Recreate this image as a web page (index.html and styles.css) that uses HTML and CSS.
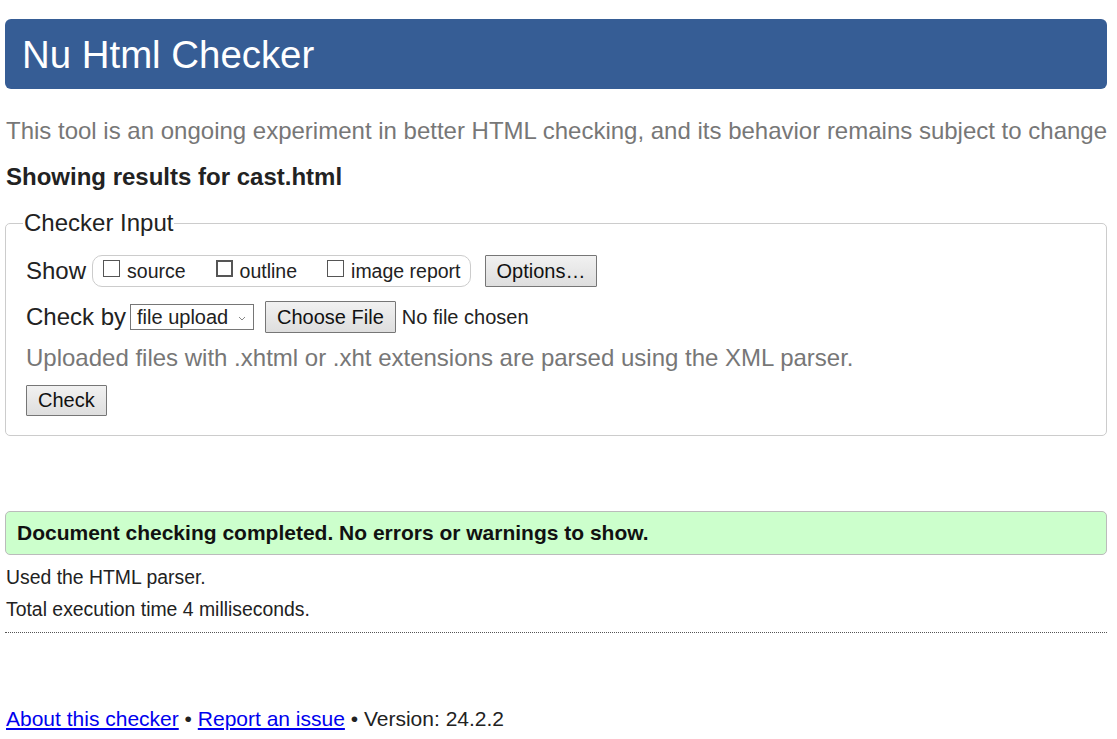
FILE: index.html
```html
<!DOCTYPE html>
<html lang="en">
<head>
<meta charset="utf-8">
<title>Nu Html Checker</title>
<link rel="stylesheet" href="styles.css">
</head>
<body>
<h1 class="title">Nu Html Checker</h1>
<p class="intro">This tool is an ongoing experiment in better HTML checking, and its behavior remains subject to change</p>
<p class="showing">Showing results for cast.html</p>
<fieldset class="input">
  <legend>Checker Input</legend>
  <div class="row row-show">
    <span class="lbl">Show</span>
    <span class="group">
      <label class="opt"><span class="cb"></span>source</label>
      <label class="opt"><span class="cb cb-dark"></span>outline</label>
      <label class="opt"><span class="cb"></span>image report</label>
    </span>
    <button class="btn btn-options" type="button">Options…</button>
  </div>
  <div class="row row-by">
    <span class="lbl">Check by</span>
    <span class="select">file upload<span class="chev"><svg width="8" height="5" viewBox="0 0 8 5"><path d="M1 1l3 3 3-3" fill="none" stroke="#888" stroke-width="1"/></svg></span></span>
    <button class="btn btn-file" type="button">Choose File</button>
    <span class="nofile">No file chosen</span>
  </div>
  <p class="hint">Uploaded files with .xhtml or .xht extensions are parsed using the XML parser.</p>
  <div class="row row-submit">
    <button class="btn btn-check" type="button">Check</button>
  </div>
</fieldset>
<div class="success">Document checking completed. No errors or warnings to show.</div>
<p class="detail detail-first">Used the HTML parser.</p>
<p class="detail">Total execution time 4 milliseconds.</p>
<hr class="sep">
<p class="footer"><a href="#">About this checker</a> • <a href="#">Report an issue</a> • Version: 24.2.2</p>
</body>
</html>
```

FILE: styles.css
```css
html, body {
  margin: 0;
  padding: 0;
  background: #fff;
}
body {
  font-family: "Liberation Sans", Arial, sans-serif;
  color: #222;
  padding: 19px 10px 0 5px;
  overflow: hidden;
}
.title {
  margin: 0;
  height: 70px;
  box-sizing: border-box;
  background: #365d95;
  color: #fff;
  font-weight: normal;
  font-size: 38.4px;
  line-height: 72px;
  padding: 0 17px;
  border-radius: 6px;
}
.intro {
  margin: 28px 0 0 1px;
  font-size: 24px;
  line-height: 28px;
  color: #777;
  white-space: nowrap;
}
.showing {
  margin: 18px 0 0 1px;
  font-size: 24px;
  line-height: 28px;
  font-weight: bold;
  color: #222;
}
.input {
  margin: 18px 0 0 0;
  border: 1px solid #ccc;
  border-radius: 5px;
  padding: 0 20px 19px 20px;
}
.input legend {
  font-size: 24px;
  line-height: normal;
  padding: 0 1px;
  margin-left: -3px;
  color: #222;
}
.row {
  display: flex;
  align-items: center;
  font-size: 24px;
  height: 32px;
}
.row-show { margin-top: 18px; }
.row-by { margin-top: 14px; }
.row-submit { margin-top: 13px; height: 31px; }
.lbl { margin-right: 6px; }
.row-by .lbl { margin-right: 4px; }
.group {
  display: inline-flex;
  align-items: center;
  border: 1px solid #ccc;
  border-radius: 10px;
  height: 32px;
  box-sizing: border-box;
  padding: 0 9px 0 10px;
  font-size: 19.5px;
}
.opt {
  display: inline-flex;
  align-items: center;
  margin-right: 30px;
}
.opt:last-child { margin-right: 0; }
.cb {
  width: 17px;
  height: 17px;
  box-sizing: border-box;
  border: 1px solid #555;
  background: #fff;
  margin-right: 7px;
  margin-top: -5px;
}
.cb-dark { border: 2px solid #555; }
.btn {
  font-family: "Liberation Sans", Arial, sans-serif;
  font-size: 20px;
  color: #111;
  background: linear-gradient(#f1f1f1, #dedede);
  border: 1px solid #767676;
  border-radius: 1px;
  padding: 0 11px;
  height: 32px;
  margin: 0;
}
.btn-options { margin-left: 14px; }
.select {
  display: inline-flex;
  align-items: center;
  height: 26px;
  box-sizing: border-box;
  border: 1px solid #767676;
  font-size: 20px;
  padding: 0 7px 0 6px;
  width: 124px;
  justify-content: space-between;
}
.chev { display: inline-flex; margin-top: 3px; }
.btn-file { margin-left: 11px; }
.nofile { font-size: 20px; margin-left: 6px; }
.hint {
  margin: 11px 0 0 0;
  font-size: 24px;
  color: #777;
  line-height: 28px;
}
.btn-check { height: 31px; }
.success {
  margin-top: 75px;
  background: #ccffcc;
  border: 1px solid #bbb;
  border-radius: 5px;
  height: 44px;
  box-sizing: border-box;
  padding: 0 11px;
  display: flex;
  align-items: center;
  font-weight: bold;
  font-size: 21px;
  color: #111;
}
.detail {
  margin: 10px 0 0 1px;
  font-size: 19.4px;
  line-height: 22px;
  color: #222;
}
.detail-first { margin-top: 11px; }
.sep {
  margin: 12px 0 0 0;
  border: 0;
  border-top: 1px dotted #555;
  height: 0;
}
.footer {
  margin: 74px 0 0 1px;
  font-size: 21px;
  line-height: 24px;
  color: #222;
}
.footer a { color: #00e; }
```
